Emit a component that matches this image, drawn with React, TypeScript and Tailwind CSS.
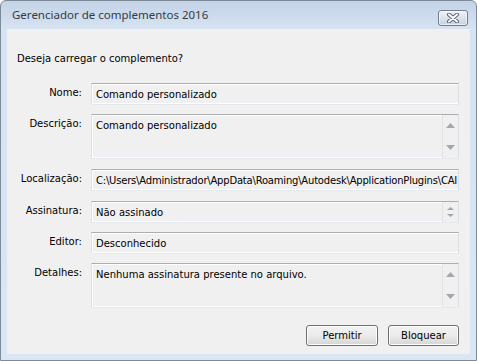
import React from "react";

const font = { fontFamily: '"DejaVu Sans", Verdana, sans-serif' };

const Arrow = ({ up, small }: { up?: boolean; small?: boolean }) => {
    const w = small ? 7 : 9;
    const h = small ? 3 : 5;
    return (
        <svg width={w} height={h} viewBox={`0 0 ${w} ${h}`}>
            {up ? (
                <polygon points={`${w / 2},0 ${w},${h} 0,${h}`} fill="#a6a6a6" />
            ) : (
                <polygon points={`0,0 ${w},0 ${w / 2},${h}`} fill="#a6a6a6" />
            )}
        </svg>
    );
};

const Field = ({
    label,
    value,
    height,
    scroll,
    small,
    tight,
}: {
    label: string;
    value: string;
    height: string;
    scroll?: boolean;
    small?: boolean;
    tight?: boolean;
}) => (
    <div className="flex items-start">
        <div className="w-[65px] shrink-0 pt-[4px] text-right leading-[12px]">{label}</div>
        <div
            className={`ml-[9px] flex w-[368px] overflow-hidden border border-t-[#abadb3] border-l-[#dbdfe6] border-r-[#dbdfe6] border-b-[#e3e9ef] bg-[#f0f0f0] ${height}`}
        >
            <div
                className={`flex-1 overflow-hidden whitespace-nowrap border border-white border-r-0 pl-[3px] pt-[4px] leading-[12px] ${tight ? "tracking-[-0.2px]" : ""}`}
            >
                {value}
            </div>
            {scroll && (
                <div
                    className={`flex w-[16px] shrink-0 flex-col items-center justify-between border-l border-[#e3e3e3] bg-[#f0f0f0] pr-[1px] ${small ? "py-[5px]" : "py-[8px]"}`}
                >
                    <Arrow up small={small} />
                    <Arrow small={small} />
                </div>
            )}
        </div>
    </div>
);

export default function App() {
    return (
        <div className="h-[361px] w-[477px] overflow-hidden bg-white">
            <div className="flex h-full w-full flex-col rounded-t-[6px] border border-[#7d8a99] bg-gradient-to-b from-[#c3d3e6] via-[#d6e3f2] via-[8%] to-[#dbe6f4]">
                <div className="flex h-[28px] items-start justify-between pl-[11px] pr-[8px]">
                    <div
                        className="pt-[6px] text-[11.5px] leading-[16px] text-[#323a44]"
                        style={{ fontFamily: '"Noto Sans", "Open Sans", sans-serif' }}
                    >
                        Gerenciador de complementos 2016
                    </div>
                    <div className="mt-[9px] flex h-[16px] w-[30px] items-center justify-center rounded-[3px] border border-[#707d8e] bg-gradient-to-b from-[#eef2f7] to-[#c7d3e2] shadow-[inset_0_0_0_1px_rgba(255,255,255,0.6)]">
                        <svg width="14" height="10" viewBox="0 0 14 10">
                            <path d="M3 1.5 L11 8.5 M11 1.5 L3 8.5" stroke="#5a6472" strokeWidth="4" strokeLinecap="round" />
                            <path d="M3 1.5 L11 8.5 M11 1.5 L3 8.5" stroke="#ffffff" strokeWidth="2" strokeLinecap="round" />
                        </svg>
                    </div>
                </div>
                <div
                    className="mx-[6px] flex h-[325px] flex-col bg-[#f0f0f0] pl-[10px] pr-[11px] text-[10px] text-black"
                    style={font}
                >
                    <div className="mt-[24px] leading-[12px]">Deseja carregar o complemento?</div>
                    <div className="mt-[18px] flex flex-col">
                        <Field label="Nome:" value="Comando personalizado" height="h-[22px]" />
                        <div className="h-[9px]" />
                        <Field label="Descrição:" value="Comando personalizado" height="h-[45px]" scroll />
                        <div className="h-[10px]" />
                        <Field
                            label="Localização:"
                            value="C:\Users\Administrador\AppData\Roaming\Autodesk\ApplicationPlugins\CAI"
                            height="h-[22px]"
                            tight
                        />
                        <div className="h-[10px]" />
                        <Field label="Assinatura:" value="Não assinado" height="h-[22px]" scroll small />
                        <div className="h-[9px]" />
                        <Field label="Editor:" value="Desconhecido" height="h-[22px]" />
                        <div className="h-[9px]" />
                        <Field
                            label="Detalhes:"
                            value="Nenhuma assinatura presente no arquivo."
                            height="h-[45px]"
                            scroll
                        />
                    </div>
                    <div className="mt-[17px] flex justify-end gap-[10px]">
                        <button className="h-[21px] w-[72px] rounded-[3px] border border-[#707070] bg-gradient-to-b from-[#f2f2f2] via-[#ebebeb] via-50% to-[#d5d5d5] shadow-[inset_0_0_0_1px_#fcfcfc] leading-[12px]">
                            Permitir
                        </button>
                        <button className="h-[21px] w-[71px] rounded-[3px] border border-[#707070] bg-gradient-to-b from-[#f2f2f2] via-[#ebebeb] via-50% to-[#d5d5d5] shadow-[inset_0_0_0_1px_#fcfcfc] leading-[12px]">
                            Bloquear
                        </button>
                    </div>
                </div>
            </div>
        </div>
    );
}
